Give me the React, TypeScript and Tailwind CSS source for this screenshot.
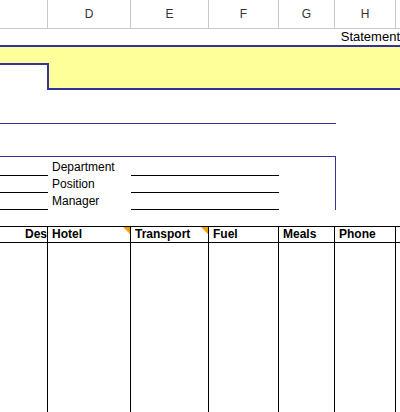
import React from 'react'

const cols = [48, 83, 78, 70, 56, 61, 4]
const letters = ['', 'D', 'E', 'F', 'G', 'H', '']
const heads = ['Description', 'Hotel', 'Transport', 'Fuel', 'Meals', 'Phone', '']

const App: React.FC = () => {
  return (
    <div className="w-[400px] h-[412px] overflow-hidden bg-white text-[12px] text-black" style={{ fontFamily: 'Arial, "Liberation Sans", sans-serif' }}>
      {/* column header */}
      <div className="flex h-[29px] bg-white border-b border-[#c8c8c8]">
        {cols.map((w, i) => (
          <div key={i} style={{ width: w }} className={`shrink-0 flex items-center justify-center text-[#333] border-r border-[#c8c8c8] ${i === 6 ? 'border-r-0' : ''}`}>
            {letters[i]}
          </div>
        ))}
      </div>
      <div className="h-[16px] flex justify-end items-center text-[13px] whitespace-nowrap">Statement</div>
      {/* yellow band */}
      <div className="h-[45px] bg-[#ffff99] border-t-2 border-b-2 border-[#333399] flex flex-col">
        <div className="h-[16px]" />
        <div className="flex-1 flex">
          <div className="w-[49px] bg-white border-t-2 border-r-2 border-[#333399] -mb-[2px]" />
        </div>
      </div>
      <div className="h-[34px] w-[336px] border-b border-[#333399]" />
      <div className="h-[33px] w-[336px] border-b border-[#333399]" />
      {/* info rows */}
      <div className="w-[336px] pt-[2px] border-r border-[#333399]">
        {['Department', 'Position', 'Manager'].map((t) => (
          <div key={t} className="flex h-[17px]">
            <div className="w-[48px] border-b border-black" />
            <div className="w-[83px] pl-[4px] leading-[16px]">{t}</div>
            <div className="w-[148px] border-b border-black" />
          </div>
        ))}
      </div>
      <div className="h-[16px]" />
      {/* table */}
      <div className="flex border-t border-b border-black h-[17px] font-bold">
        {cols.map((w, i) => (
          <div key={i} style={{ width: w }} className={`relative shrink-0 overflow-hidden whitespace-nowrap leading-[15px] border-r border-black ${i === 0 ? 'flex justify-end pr-[0px]' : 'pl-[4px]'} ${i === 6 ? 'border-r-0' : ''}`}>
            <span className={i === 0 ? '-mr-[44px]' : ''}>{heads[i]}</span>
            {(i === 1 || i === 2) && (
              <div className="absolute top-0 right-0 w-0 h-0 border-t-[7px] border-l-[7px] border-t-[#f0a000] border-l-transparent" />
            )}
          </div>
        ))}
      </div>
      <div className="flex h-[200px]">
        {cols.map((w, i) => (
          <div key={i} style={{ width: w }} className={`shrink-0 border-r border-black ${i === 6 ? 'border-r-0' : ''}`} />
        ))}
      </div>
    </div>
  )
}

export default App
